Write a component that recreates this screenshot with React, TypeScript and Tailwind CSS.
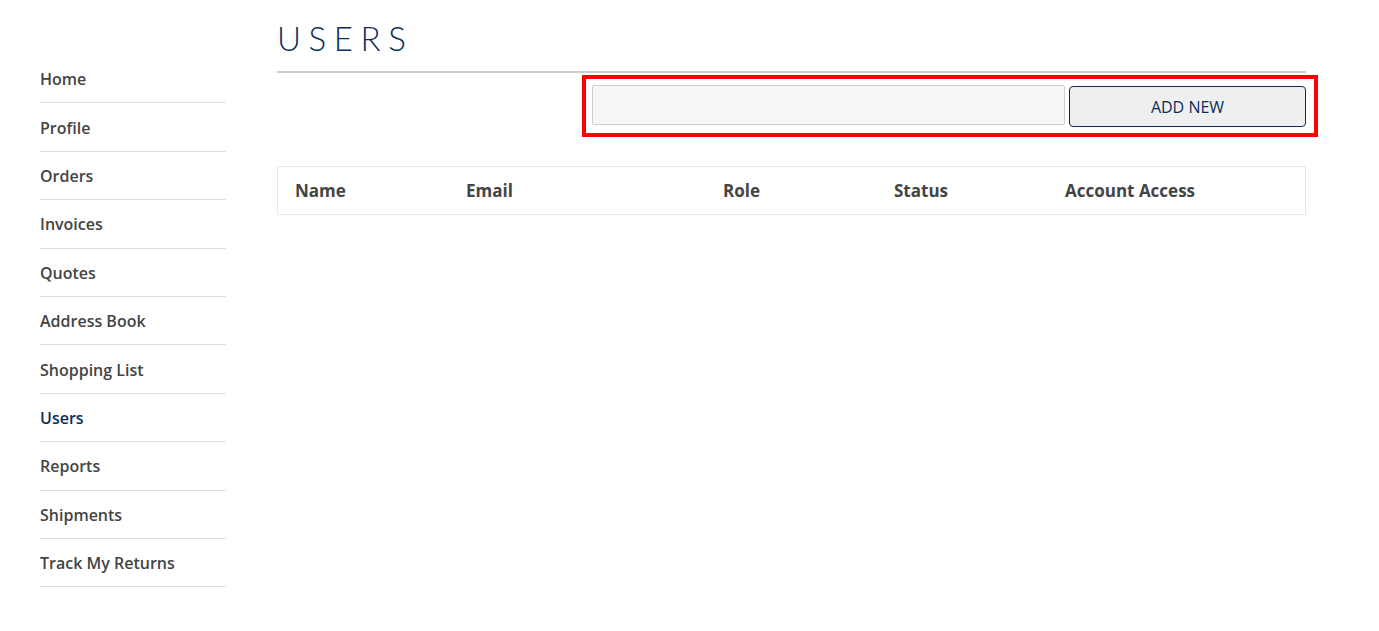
const navItems = [
  "Home",
  "Profile",
  "Orders",
  "Invoices",
  "Quotes",
  "Address Book",
  "Shopping List",
  "Users",
  "Reports",
  "Shipments",
  "Track My Returns",
];

const columns = [
  { label: "Name", width: "w-[171px]" },
  { label: "Email", width: "w-[257px]" },
  { label: "Role", width: "w-[171px]" },
  { label: "Status", width: "w-[171px]" },
  { label: "Account Access", width: "flex-1" },
];

function Sidebar() {
  return (
    <nav className="w-[186px] shrink-0 pt-[55px]">
      {navItems.map((item) => (
        <a
          key={item}
          href="#"
          className={`flex h-[48.4px] items-center border-b border-[#dcdcdc] pt-[1px] text-[16px] font-semibold ${
            item === "Users" ? "text-[#0b2d5b]" : "text-[#444]"
          }`}
        >
          {item}
        </a>
      ))}
    </nav>
  );
}

export default function App() {
  return (
    <div className="flex min-h-[631px] bg-white pl-10 font-['Open_Sans',sans-serif]">
      <Sidebar />
      <main className="ml-[51px] w-[1029px] shrink-0">
        <h1 className="pt-[19px] pb-[14px] font-['Lato',sans-serif] text-[33px] font-light leading-[38px] tracking-[0.23em] text-[#0b2d5b]">
          USERS
        </h1>
        <div className="h-[2px] bg-[#cccccc]" />

        <div className="mt-[2px] -mr-[12px] ml-[305px] flex gap-[4px] border-4 border-[#ff0000] py-[6px] pr-[8px] pl-[6px]">
          <input
            type="text"
            className="h-[40px] flex-1 rounded-[2px] border border-[#cfcfcf] bg-[#f5f6f8] px-3 outline-none"
          />
          <button
            type="button"
            className="mt-[1px] h-[41px] w-[237px] rounded-[4px] border border-[#0b2d5b] bg-[#efefef] text-[16px] text-[#0b2d5b]"
          >
            ADD NEW
          </button>
        </div>

        <div className="mt-[29px] flex h-[49px] items-center border border-[#e8e8e8] pl-[17px]">
          {columns.map((col) => (
            <div key={col.label} className={`${col.width} text-[17px] font-bold text-[#444]`}>
              {col.label}
            </div>
          ))}
        </div>
      </main>
    </div>
  );
}
